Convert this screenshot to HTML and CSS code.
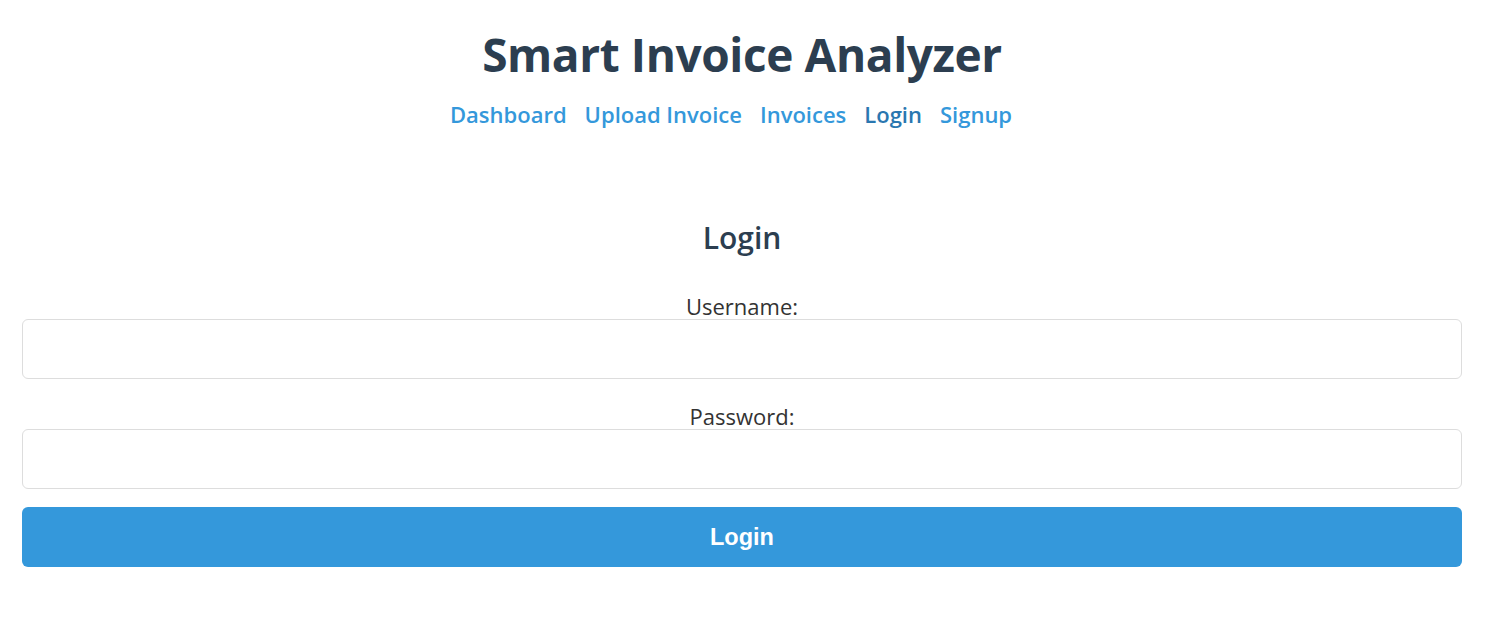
FILE: index.html
```html
<!DOCTYPE html>
<html lang="en">
<head>
<meta charset="utf-8">
<title>Smart Invoice Analyzer</title>
<link rel="stylesheet" href="styles.css">
</head>
<body>
<header class="site-header">
  <h1 class="site-title">Smart Invoice Analyzer</h1>
  <nav class="site-nav">
    <a href="#" class="nav-link">Dashboard</a>
    <a href="#" class="nav-link">Upload Invoice</a>
    <a href="#" class="nav-link">Invoices</a>
    <a href="#" class="nav-link active">Login</a>
    <a href="#" class="nav-link">Signup</a>
  </nav>
</header>
<main class="login-section">
  <h2 class="section-title">Login</h2>
  <form class="login-form">
    <label class="field-label" for="username">Username:</label>
    <input class="field-input" type="text" id="username">
    <label class="field-label" for="password">Password:</label>
    <input class="field-input last" type="password" id="password">
    <button class="submit-btn" type="button">Login</button>
  </form>
</main>
</body>
</html>
```
FILE: styles.css
```css
html, body {
  margin: 0;
  background: #ffffff;
}
body {
  padding: 0 28px 0 22px;
  font-family: "Open Sans", "Noto Sans", sans-serif;
  color: #333333;
}
.site-header {
  padding-top: 26px;
  text-align: center;
}
.site-title {
  margin: 0;
  font-size: 46px;
  line-height: 56px;
  letter-spacing: -0.4px;
  font-weight: 700;
  color: #2c3e50;
}
.site-nav {
  margin-top: 18px;
  display: flex;
  justify-content: center;
  gap: 18px;
  height: 28px;
  align-items: center;
  padding-right: 22px;
}
.nav-link {
  font-size: 22px;
  line-height: 28px;
  font-weight: 600;
  color: #3498db;
  text-decoration: none;
}
.nav-link.active {
  color: #2a77b0;
}
.login-section {
  margin-top: 92px;
  text-align: center;
}
.section-title {
  margin: 0;
  font-size: 30px;
  line-height: 36px;
  font-weight: 600;
  color: #2c3e50;
}
.login-form {
  margin-top: 37px;
  display: flex;
  flex-direction: column;
}
.field-label {
  font-size: 22px;
  line-height: 26px;
  color: #333333;
}
.field-input {
  box-sizing: border-box;
  height: 60px;
  width: 100%;
  margin: 0 0 24px;
  padding: 0 15px;
  border: 1px solid #dddddd;
  border-radius: 6px;
  font-size: 20px;
  background: #fff;
}
.field-input.last {
  margin-bottom: 18px;
}
.submit-btn {
  box-sizing: border-box;
  height: 60px;
  width: 100%;
  border: none;
  border-radius: 6px;
  background: #3498db;
  color: #ffffff;
  font-family: "Liberation Sans", Arial, sans-serif;
  font-weight: 700;
  font-size: 23.5px;
  cursor: pointer;
}
```
